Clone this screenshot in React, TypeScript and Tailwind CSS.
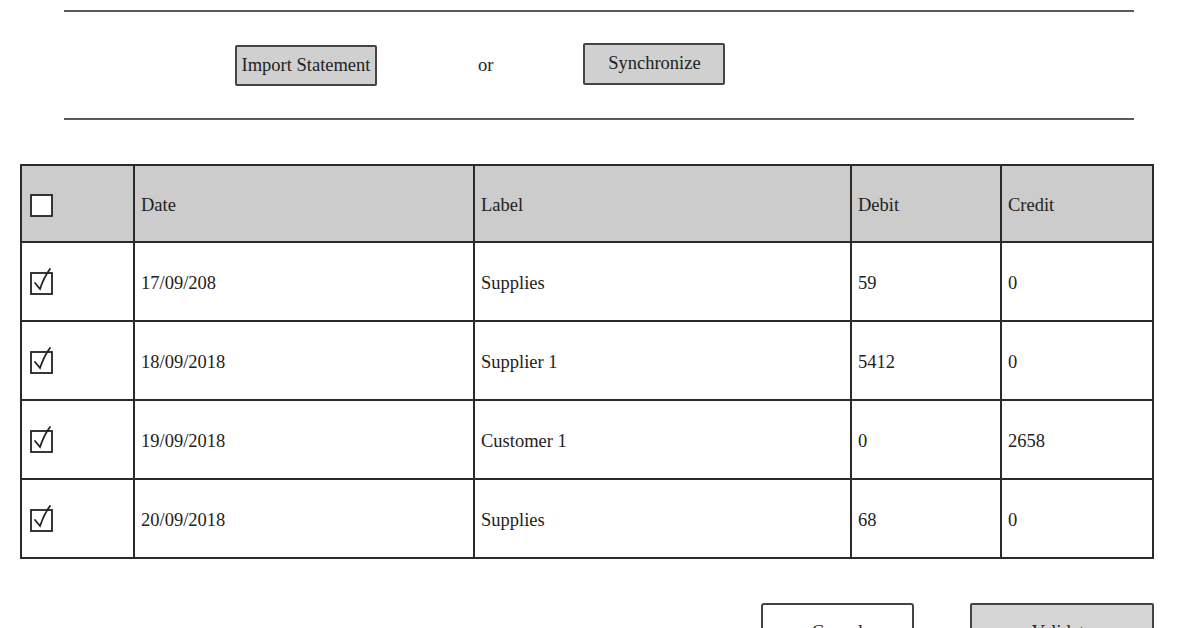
import React from 'react';

const rows = [
  { date: '17/09/208', label: 'Supplies', debit: '59', credit: '0' },
  { date: '18/09/2018', label: 'Supplier 1', debit: '5412', credit: '0' },
  { date: '19/09/2018', label: 'Customer 1', debit: '0', credit: '2658' },
  { date: '20/09/2018', label: 'Supplies', debit: '68', credit: '0' },
];

function CheckBox({ checked }: { checked?: boolean }) {
  return (
    <svg width="28" height="30" viewBox="0 0 28 30" className="block">
      <rect x="1" y="6" width="21" height="21" fill="white" stroke="#222" strokeWidth="1.8" />
      {checked && (
        <path d="M5 16 L10 22 Q14 10 20 2" fill="none" stroke="#222" strokeWidth="1.8" strokeLinecap="round" />
      )}
    </svg>
  );
}

export default function App() {
  const cell = 'border-2 border-[#2a2a2a] px-[6px] pt-[4px] text-left align-middle font-normal';
  return (
    <div className="w-[1200px] h-[628px] overflow-hidden bg-white text-[18.5px] text-[#222]" style={{ fontFamily: '"Liberation Serif", serif' }}>
      <div className="pt-[10px]">
        <div className="ml-[64px] w-[1070px] h-[2px] bg-[#5a5a5a]" />
        <div className="h-[106px] flex items-center">
          <button className="ml-[235px] w-[142px] h-[41px] mt-[1px] bg-[#d0d0d0] border-2 border-[#444] rounded-[2px] text-[18.5px]">
            Import Statement
          </button>
          <span className="ml-[101px] mt-[1px]">or</span>
          <button className="ml-[90px] w-[142px] h-[42px] -mt-[2px] bg-[#d0d0d0] border-2 border-[#444] rounded-[2px] text-[18.5px]">
            Synchronize
          </button>
        </div>
        <div className="ml-[64px] w-[1070px] h-[2px] bg-[#5a5a5a]" />
      </div>

      <table className="ml-[20px] mt-[44px] w-[1132px] table-fixed border-collapse">
        <colgroup>
          <col className="w-[113px]" />
          <col className="w-[340px]" />
          <col className="w-[377px]" />
          <col className="w-[150px]" />
          <col className="w-[152px]" />
        </colgroup>
        <thead>
          <tr className="h-[77px] bg-[#cccccc]">
            <th className={cell}>
              <div className="pl-[2px] -mt-[4px]">
                <CheckBox />
              </div>
            </th>
            <th className={cell}>Date</th>
            <th className={cell}>Label</th>
            <th className={cell}>Debit</th>
            <th className={cell}>Credit</th>
          </tr>
        </thead>
        <tbody>
          {rows.map((r) => (
            <tr key={r.date} className="h-[79px]">
              <td className={cell}>
                <div className="pl-[2px] -mt-[3px]">
                  <CheckBox checked />
                </div>
              </td>
              <td className={cell}>{r.date}</td>
              <td className={cell}>{r.label}</td>
              <td className={cell}>{r.debit}</td>
              <td className={cell}>{r.credit}</td>
            </tr>
          ))}
        </tbody>
      </table>

      <div className="mt-[44px] flex">
        <button className="ml-[761px] w-[153px] h-[60px] bg-white border-2 border-[#444] rounded-[3px] text-[18.5px]">
          Cancel
        </button>
        <button className="ml-[56px] w-[184px] h-[60px] bg-[#d6d6d6] border-2 border-[#444] rounded-[2px] text-[18.5px]">
          Validate
        </button>
      </div>
    </div>
  );
}
